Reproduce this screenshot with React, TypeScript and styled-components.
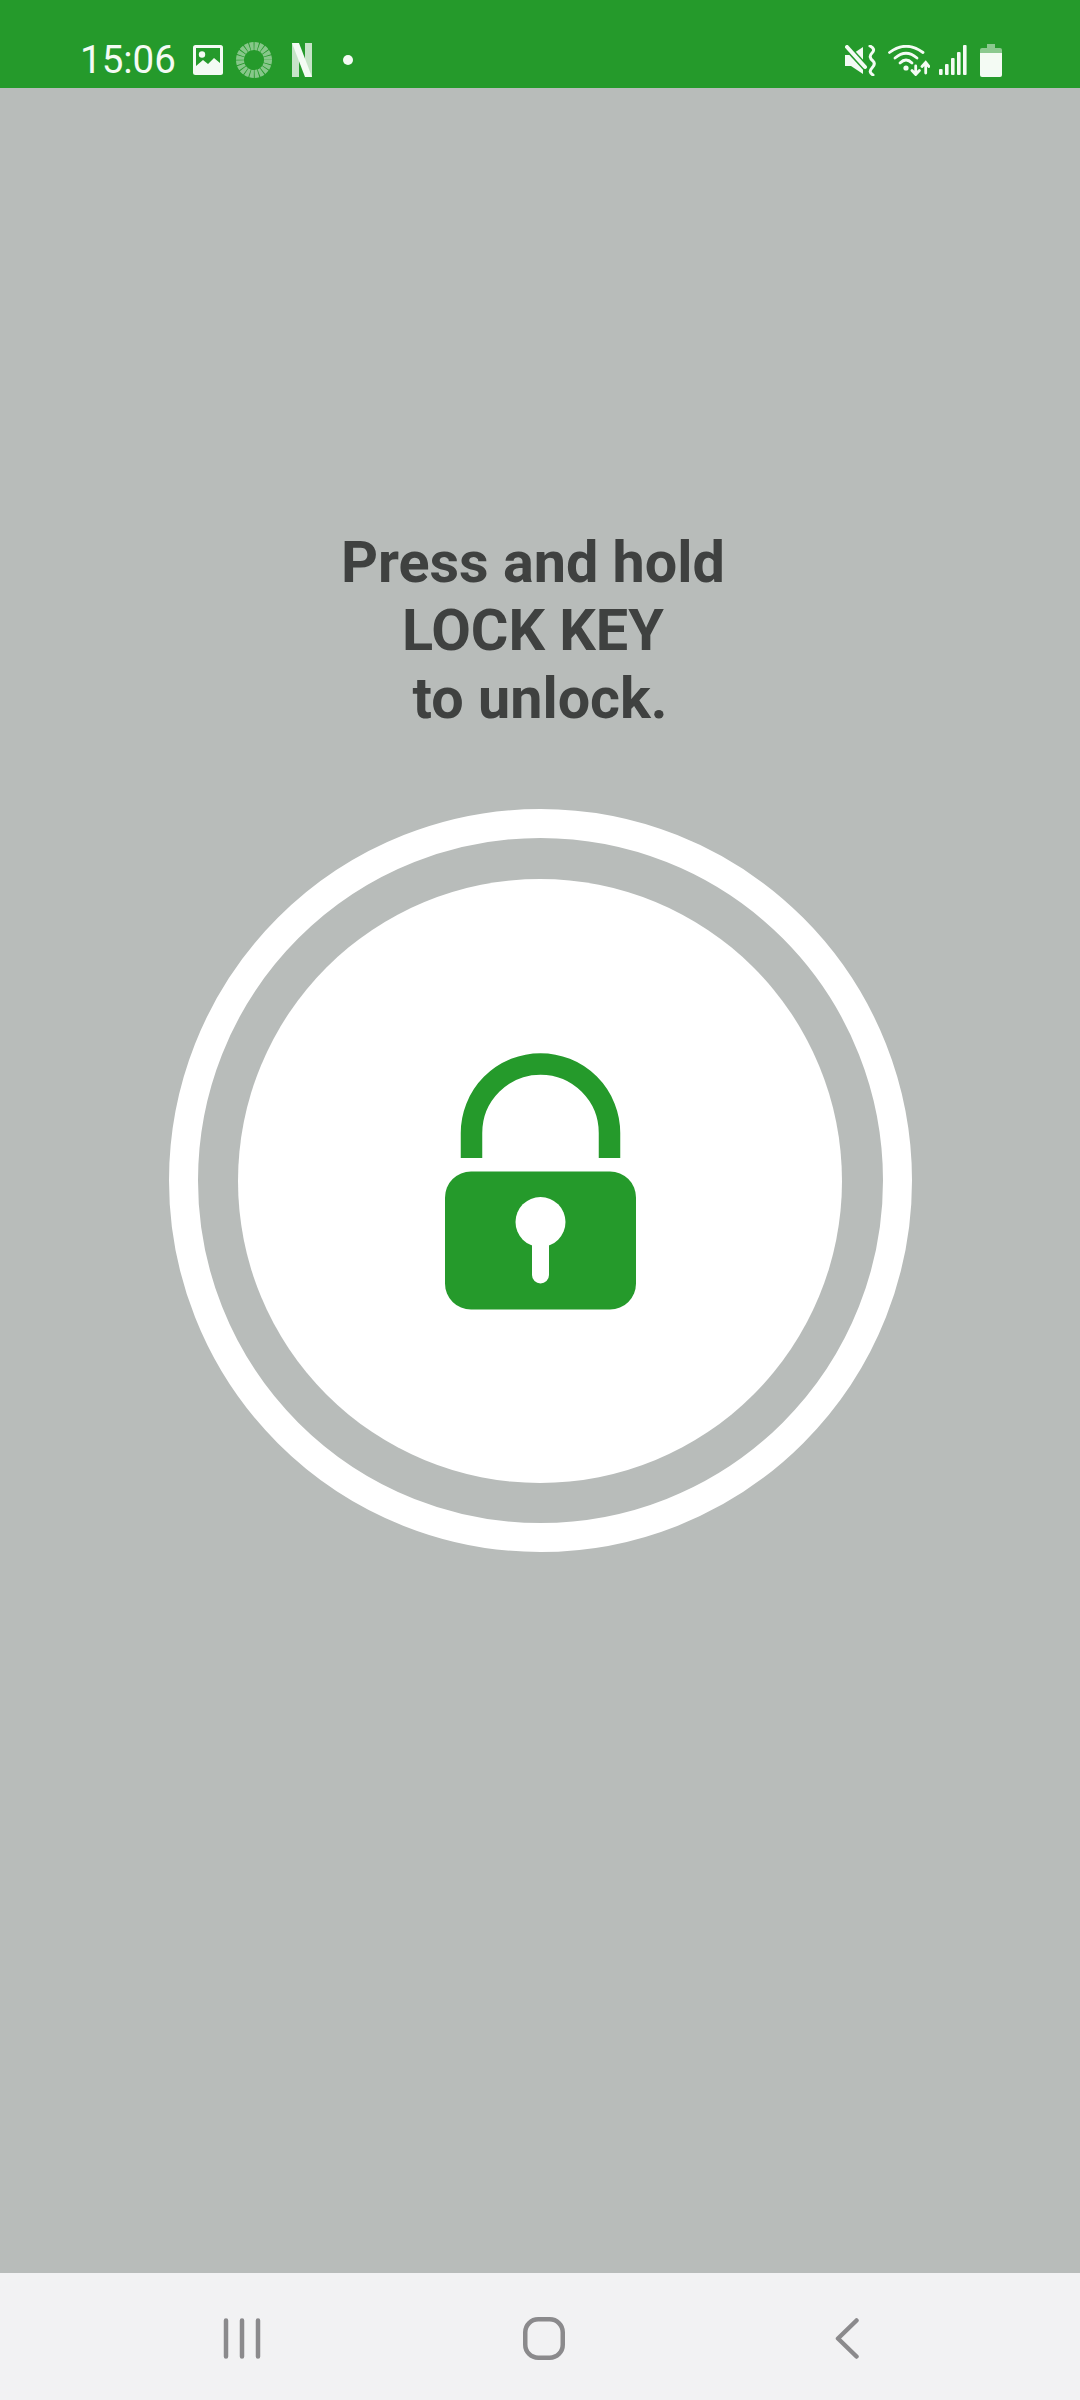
import React from "react";
import styled, { createGlobalStyle } from "styled-components";

const GlobalStyle = createGlobalStyle`
  html, body {
    margin: 0;
    padding: 0;
    background: #b8bcba;
  }
`;

const Screen = styled.div`
  width: 1080px;
  height: 2400px;
  display: flex;
  flex-direction: column;
  overflow: hidden;
  font-family: Roboto, "Liberation Sans", sans-serif;
`;

const StatusBar = styled.header`
  height: 88px;
  box-sizing: border-box;
  padding: 32px 78px 0 80px;
  background: #259a2b;
  display: flex;
  align-items: center;
  flex-shrink: 0;
`;

const Time = styled.span`
  color: #f4fbf4;
  font-size: 38.5px;
  font-weight: 400;
  line-height: 56px;
  margin-right: 17px;
`;

const Glyph = styled.svg<{ $gap?: number }>`
  display: block;
  flex-shrink: 0;
  margin-right: ${(p) => p.$gap ?? 0}px;
`;

const Spacer = styled.div`
  flex: 1;
`;

const Main = styled.main`
  flex: 1;
  background: #b8bcba;
  display: flex;
  flex-direction: column;
  align-items: center;
  padding-top: 441px;
`;

const Prompt = styled.h1`
  margin: 0 0 76px;
  color: #3f4140;
  font-size: 57.5px;
  font-weight: 700;
  line-height: 68px;
  text-align: center;
  white-space: pre;
`;

const Ring = styled.div`
  width: 743px;
  height: 743px;
  box-sizing: border-box;
  border: 29px solid #fff;
  border-radius: 50%;
  display: flex;
  align-items: center;
  justify-content: center;
`;

const Disc = styled.div`
  width: 604px;
  height: 604px;
  border-radius: 50%;
  background: #fff;
  display: flex;
  align-items: center;
  justify-content: center;
`;

const NavBar = styled.nav`
  height: 127px;
  flex-shrink: 0;
  box-sizing: border-box;
  padding: 4px 0 0 91px;
  background: #f2f2f3;
  display: grid;
  grid-template-columns: repeat(3, 302.5px);
  align-items: center;
  justify-items: center;
`;

const signalBars = [6, 11, 17, 23, 30];

const App: React.FC = () => {
  return (
    <Screen>
      <GlobalStyle />
      <StatusBar>
        <Time>15:06</Time>
        <Glyph width="30" height="30" viewBox="0 0 30 30" $gap={13}>
          <rect width="30" height="30" rx="2.5" fill="#f4fbf4" />
          <rect x="3" y="3" width="24" height="24" fill="#259a2b" />
          <circle cx="9" cy="9.5" r="3.2" fill="#f4fbf4" />
          <path d="M3 21 L10 15 L15 19 L21 13 L27 18 V27 H3 Z" fill="#f4fbf4" />
        </Glyph>
        <Glyph width="36" height="36" viewBox="0 0 36 36" $gap={20}>
          <circle
            cx="18"
            cy="18"
            r="14"
            fill="none"
            stroke="#fff"
            strokeOpacity="0.45"
            strokeWidth="8"
            strokeDasharray="3.6 0.8"
          />
        </Glyph>
        <Glyph width="20" height="34" viewBox="0 0 20 34" $gap={31}>
          <rect width="7" height="34" fill="#c7e4c8" />
          <rect x="13" width="7" height="34" fill="#c7e4c8" />
          <path d="M0 0 H7 L20 34 H13 Z" fill="#f4fbf4" />
        </Glyph>
        <Glyph width="10" height="10" viewBox="0 0 10 10">
          <circle cx="5" cy="5" r="5" fill="#f4fbf4" />
        </Glyph>
        <Spacer />
        <Glyph width="32" height="31" viewBox="0 0 32 31" $gap={11}>
          <path d="M0 10 H6 L18 2 V29 L6 21 H0 Z" fill="#f4fbf4" />
          <path d="M-1 -1 L21 23" stroke="#259a2b" strokeWidth="7" />
          <path d="M2 2 L20 22" stroke="#f4fbf4" strokeWidth="4" strokeLinecap="round" />
          <path
            d="M25 1 Q31 4 27 8 Q23 12 28 16 Q31 19 27 23 Q23 27 28 30"
            fill="none"
            stroke="#f4fbf4"
            strokeWidth="3"
            strokeLinecap="round"
          />
        </Glyph>
        <Glyph width="42" height="31" viewBox="0 0 42 31" $gap={9}>
          <g fill="none" stroke="#f4fbf4" strokeWidth="2.8" strokeLinecap="round">
            <path d="M1.5 7.5 Q18 -5 35 7.5" />
            <path d="M7 13 Q18 3.5 29 13" />
            <path d="M12 18 Q18 12 24 18" />
            <path d="M27.7 21 V29 M24 25.5 L27.7 29.5 L31.4 25.5" />
            <path d="M37.7 28 V18 M34 21.5 L37.7 17.5 L41 21.5" />
          </g>
          <circle cx="18" cy="23" r="2.6" fill="#f4fbf4" />
        </Glyph>
        <Glyph width="28" height="30" viewBox="0 0 28 30" $gap={13}>
          {signalBars.map((h, i) => (
            <rect
              key={h}
              x={i * 6}
              y={30 - h}
              width="3.6"
              height={h}
              rx="1"
              fill="#f4fbf4"
            />
          ))}
        </Glyph>
        <Glyph width="22" height="33" viewBox="0 0 22 33">
          <path d="M7 0 H15 V4 H20 Q22 4 22 6 V9 H0 V6 Q0 4 2 4 H7 Z" fill="#8cc98f" />
          <path d="M0 9 H22 V31 Q22 33 20 33 H2 Q0 33 0 31 Z" fill="#f4fbf4" />
        </Glyph>
      </StatusBar>

      <Main>
        <Prompt>{"Press and hold \nLOCK KEY \nto unlock."}</Prompt>
        <Ring>
          <Disc>
            <Glyph width="191" height="259" viewBox="0 -2 191 259">
              <path
                d="M26.5 105 V80 A69 69 0 0 1 164.5 80 V105"
                fill="none"
                stroke="#259a2b"
                strokeWidth="21.5"
              />
              <rect y="118.5" width="191" height="138" rx="26" fill="#259a2b" />
              <circle cx="95.5" cy="169" r="25" fill="#fff" />
              <rect x="87" y="180" width="17" height="50.5" rx="8.5" fill="#fff" />
            </Glyph>
          </Disc>
        </Ring>
      </Main>

      <NavBar>
        <Glyph width="38" height="41" viewBox="0 0 38 41">
          <path
            d="M3 2.5 V38.5 M19 2.5 V38.5 M35 2.5 V38.5"
            stroke="#8b8a8c"
            strokeWidth="4.5"
            strokeLinecap="round"
          />
        </Glyph>
        <Glyph width="42" height="43" viewBox="0 0 42 43" $gap={2}>
          <rect
            x="2.25"
            y="2.25"
            width="37.5"
            height="38.5"
            rx="13"
            fill="none"
            stroke="#8b8a8c"
            strokeWidth="4.5"
          />
        </Glyph>
        <Glyph width="24" height="41" viewBox="0 0 24 41">
          <path
            d="M21.5 2.5 L3 20.5 L21.5 38.5"
            fill="none"
            stroke="#8b8a8c"
            strokeWidth="4.5"
            strokeLinecap="round"
            strokeLinejoin="round"
          />
        </Glyph>
      </NavBar>
    </Screen>
  );
};

export default App;
